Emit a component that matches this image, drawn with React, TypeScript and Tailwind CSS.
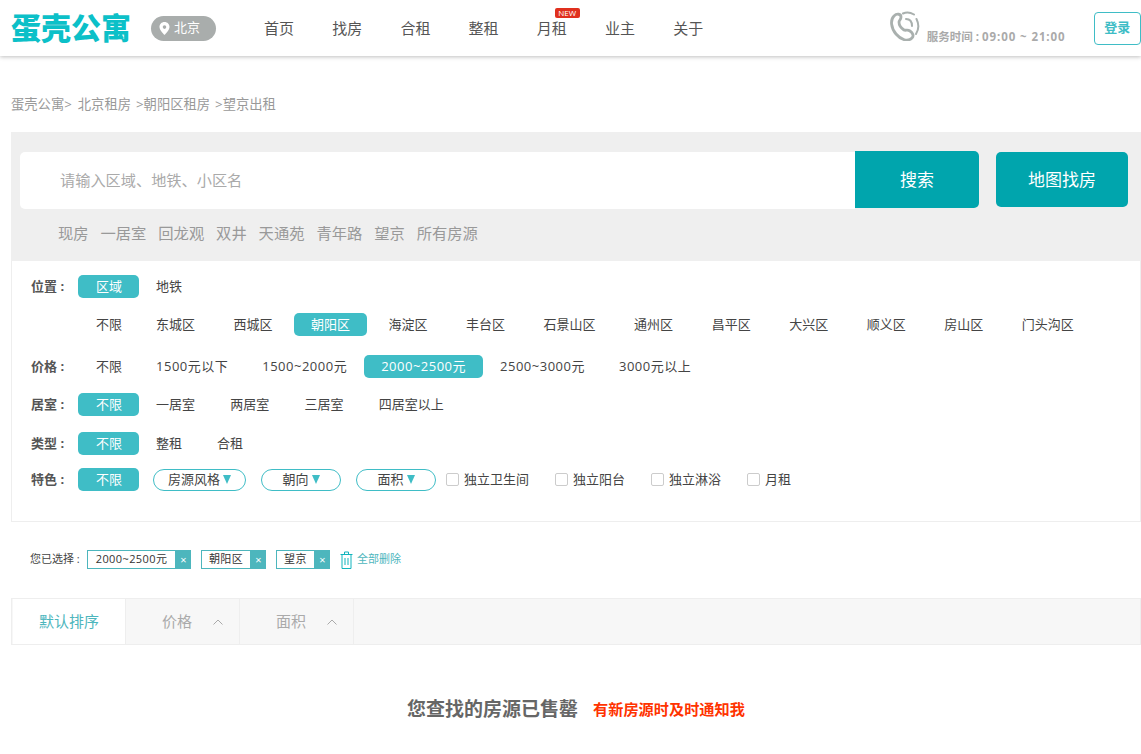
const font = { fontFamily: '"Open Sans", "Noto Sans CJK SC", sans-serif' };

const navItems = ["首页", "找房", "合租", "整租", "月租", "业主", "关于"];
const hotWords = ["现房", "一居室", "回龙观", "双井", "天通苑", "青年路", "望京", "所有房源"];
const districts = ["不限", "东城区", "西城区", "朝阳区", "海淀区", "丰台区", "石景山区", "通州区", "昌平区", "大兴区", "顺义区", "房山区", "门头沟区"];
const prices = ["不限", "1500元以下", "1500~2000元", "2000~2500元", "2500~3000元", "3000元以上"];
const rooms = ["不限", "一居室", "两居室", "三居室", "四居室以上"];
const types = ["不限", "整租", "合租"];
const dropdowns = [
  { label: "房源风格", width: "w-[93px]" },
  { label: "朝向", width: "w-[80px]" },
  { label: "面积", width: "w-[80px]" },
];
const checks = ["独立卫生间", "独立阳台", "独立淋浴", "月租"];
const chips = [
  { label: "2000~2500元", width: "w-[89px]" },
  { label: "朝阳区", width: "w-[50px]" },
  { label: "望京", width: "w-[39px]" },
];

function Option({ label, active, wide }: { label: string; active?: boolean; wide?: boolean }) {
  return (
    <span
      className={`flex h-[23px] items-center px-[17px] whitespace-nowrap ${wide ? "tracking-[0.5px]" : ""} ${
        active ? "rounded-[5px] bg-[#3fbdc6] text-white" : "text-[#444]"
      }`}
    >
      {label}
    </span>
  );
}

function FilterRow({ label, className, children }: { label?: string; className: string; children: React.ReactNode }) {
  return (
    <div className={`flex h-[23px] items-center text-[13px] ${className}`}>
      <span className="w-[47px] shrink-0 font-bold whitespace-nowrap text-[#555]">{label}</span>
      {children}
    </div>
  );
}

function PhoneIcon() {
  return (
    <svg width="31" height="30" viewBox="0 0 31 30" fill="none" stroke="#a9b0ae" strokeLinecap="round">
      <path d="M5 5 C1 9 2 17 7 23 C12 29 19 31 23 27 C25 25 24 22 21 20 C18 18 17 20 15 19 C12 17 10 14 10 11 C10 9 12 9 12 6 C12 3 8 2 5 5 Z" strokeWidth="2.800" />
      <path d="M14 2.500 C17 1 21 1 25 3.500" strokeWidth="2" />
      <path d="M17 8 C21 8 23 11 23 15" strokeWidth="2" />
      <path d="M27.500 8 C30 13 29.500 19 27 23" strokeWidth="2" />
    </svg>
  );
}

export default function App() {
  return (
    <div className="h-[754px] w-[1141px] overflow-hidden bg-white" style={font}>
      <header className="relative flex h-14 items-center pl-[11px] shadow-[0_1px_4px_rgba(0,0,0,0.25)]">
        <span className="w-[120px] text-[30px] leading-none font-black whitespace-nowrap text-[#0cc0c8]">蛋壳公寓</span>
        <span className="ml-5 flex h-[25px] w-[65px] items-center gap-1 rounded-full bg-[#a9adac] pl-[8px] text-[13px] text-white">
          <svg width="11" height="13" viewBox="0 0 11 13">
            <path fillRule="evenodd" fill="#fff" d="M5.500 0C2.500 0 .5 2.200.5 5c0 3.300 5 8 5 8s5-4.700 5-8c0-2.800-2-5-5-5Zm0 3.300a1.800 1.800 0 1 1 0 3.600 1.800 1.800 0 0 1 0-3.600Z" />
          </svg>
          北京
        </span>
        <nav className="ml-12 flex gap-[38.200px]">
          {navItems.map((item) => (
            <span key={item} className="relative w-[30px] text-[15px] whitespace-nowrap text-[#555]">
              {item}
              {item === "月租" && (
                <span className="absolute top-[-9px] left-[18px] flex h-[10px] w-[25px] items-center justify-center rounded-[2px] bg-[#e0301e] text-[8px] leading-none text-white">
                  NEW
                </span>
              )}
            </span>
          ))}
        </nav>
        <div className="ml-[185.700px] flex items-start">
          <PhoneIcon />
          <span className="mt-[17px] ml-[7px] w-[149px] text-[11.500px] font-bold whitespace-nowrap text-[#aaa]">
            服务时间 : <span className="tracking-[0.9px]">09:00 ~ 21:00</span>
          </span>
        </div>
        <span className="ml-[18px] flex h-[33px] w-[47px] shrink-0 items-center justify-center rounded-[4px] border border-[#3fbdc6] text-[13px] font-bold text-[#3fbdc6]">
          登录
        </span>
      </header>

      <div className="pt-[38px] pl-[11px]">
        <div className="flex h-5 text-[13.300px] leading-5 whitespace-nowrap text-[#999]">
          <span>蛋壳公寓&gt;</span>
          <span className="ml-[6px]">北京租房</span>
          <span className="ml-[5px]">&gt;朝阳区租房</span>
          <span className="ml-[5px]">&gt;望京出租</span>
        </div>

        <section className="mt-[18px] h-[129px] bg-[#efefef] pt-[19px] pl-[9px]">
          <div className="flex items-start">
            <div className="mt-px flex h-[57px] w-[835px] items-center rounded-l-[5px] bg-white pl-10 text-[15.200px] text-[#aaa]">
              请输入区域、地铁、小区名
            </div>
            <div className="flex h-[57px] w-[124px] items-center justify-center rounded-r-[5px] bg-[#00a5ad] text-[17px] text-white">搜索</div>
            <div className="ml-[17px] flex h-[55px] w-[132px] translate-y-px items-center justify-center rounded-[5px] bg-[#00a5ad] text-[17px] text-white">
              地图找房
            </div>
          </div>
          <div className="mt-[14px] flex gap-[11.900px] pl-[38px] text-[15.300px] leading-5 whitespace-nowrap text-[#999]">
            {hotWords.map((word) => (
              <span key={word}>{word}</span>
            ))}
          </div>
        </section>

        <section className="h-[261px] border-x border-b border-[#eee] pt-[14px] pl-[19px]">
          <FilterRow label="位置 :" className="[&>*:nth-child(2)]:pl-[18px]">
            <Option label="区域" active />
            <Option label="地铁" />
          </FilterRow>
          <FilterRow className="mt-[15px] gap-[4.500px] [&>*:first-child]:mr-[-4.500px] [&>*:nth-child(2)]:mr-[-4.500px] [&>*:nth-child(2)]:pl-[18px]">
            {districts.map((d) => (
              <Option key={d} label={d} active={d === "朝阳区"} />
            ))}
          </FilterRow>
          <FilterRow label="价格 :" className="mt-[19px] [&>*:nth-child(2)]:pl-[18px]">
            {prices.map((p) => (
              <Option key={p} label={p} active={p === "2000~2500元"} wide={p !== "不限"} />
            ))}
          </FilterRow>
          <FilterRow label="居室 :" className="mt-[15px] gap-[1.200px] [&>*:first-child]:mr-[-1.200px] [&>*:nth-child(2)]:mr-[-1.200px] [&>*:nth-child(2)]:pl-[18px]">
            {rooms.map((r, i) => (
              <Option key={r} label={r} active={i === 0} />
            ))}
          </FilterRow>
          <FilterRow label="类型 :" className="mt-[16px] gap-px [&>*:first-child]:mr-[-1px] [&>*:nth-child(2)]:mr-[-1px] [&>*:nth-child(2)]:pl-[18px]">
            {types.map((t, i) => (
              <Option key={t} label={t} active={i === 0} />
            ))}
          </FilterRow>
          <FilterRow label="特色 :" className="mt-[13px] [&>*:nth-child(2)]:pl-[18px]">
            <Option label="不限" active />
            <div className="ml-[14px] flex items-center gap-[15px]">
              {dropdowns.map((d) => (
                <span key={d.label} className={`flex h-[22px] items-center justify-center gap-[3px] rounded-full border border-[#3fbdc6] text-[#444] ${d.width}`}>
                  {d.label}
                  <span className="h-0 w-0 border-x-[4px] border-t-[9px] border-x-transparent border-t-[#3fbdc6]" />
                </span>
              ))}
            </div>
            <div className="ml-[10px] flex items-center gap-[26px]">
              {checks.map((c) => (
                <span key={c} className="flex items-center gap-[5px] text-[#444]">
                  <span className="h-[13px] w-[13px] rounded-[2px] border border-[#ccc]" />
                  {c}
                </span>
              ))}
            </div>
          </FilterRow>
        </section>

        <div className="mt-[28px] flex h-[19px] items-center pl-[19px]">
          <span className="w-[57px] text-[11px] whitespace-nowrap text-[#444]">您已选择 :</span>
          <div className="flex gap-[10px]">
            {chips.map((c) => (
              <span key={c.label} className="flex h-[19px] items-stretch">
                <span className={`flex items-center justify-center border border-[#4db6bd] text-[11px] tracking-[0.4px] text-[#333] ${c.width}`}>{c.label}</span>
                <span className="flex w-[15px] items-center justify-center bg-[#4db6bd] text-[11px] leading-none text-white">×</span>
              </span>
            ))}
          </div>
          <svg className="ml-[10px]" width="13" height="18" viewBox="0 0 13 18" fill="none" stroke="#10b4bd" strokeWidth="1">
            <path d="M.5 3.500h12M4.500 3.500v-2.500h4v2.500M2 3.500v14h9v-14M5 7v7M8 7v7" />
          </svg>
          <span className="ml-[4px] text-[11px] text-[#4db6bd]">全部删除</span>
        </div>

        <div className="mt-[29px] flex h-[47px] border border-[#eee] bg-[#f7f7f7] pl-px text-[15px] text-[#aaa]">
          <span className="flex w-[113px] items-center justify-center border-r border-[#eee] bg-white text-[#4db6bd]">默认排序</span>
          {["价格", "面积"].map((label) => (
            <span key={label} className="flex w-[114px] items-center border-r border-[#eee] pl-[36px]">
              {label}
              <svg className="ml-[21px]" width="10" height="6" viewBox="0 0 10 6" fill="none" stroke="#aaa" strokeWidth="1">
                <path d="M.5 5.500 5 1l4.500 4.500" />
              </svg>
            </span>
          ))}
        </div>

        <div className="mt-[50px] flex items-center pl-[396px]">
          <span className="text-[19px] font-bold text-[#666]">您查找的房源已售罄</span>
          <span className="ml-[15px] text-[15.200px] font-bold text-[#ff3300]">有新房源时及时通知我</span>
        </div>
      </div>
    </div>
  );
}
